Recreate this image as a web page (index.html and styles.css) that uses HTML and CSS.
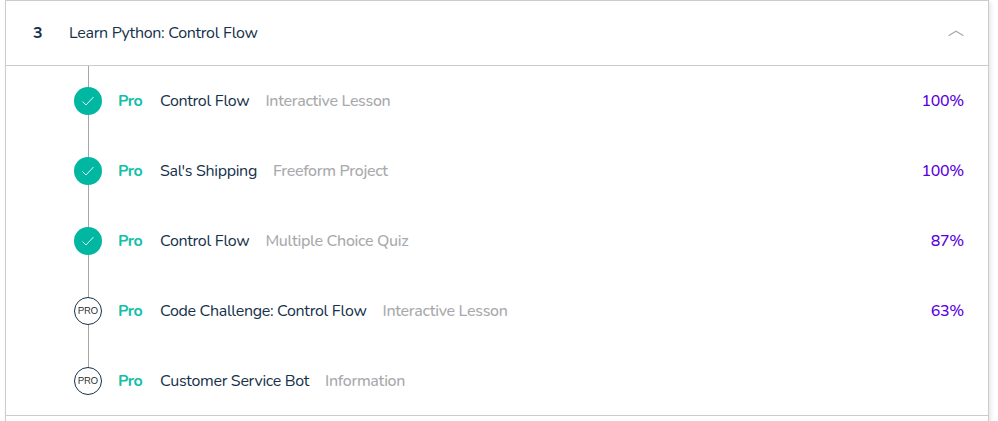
FILE: index.html
```html
<!DOCTYPE html>
<html lang="en">
<head>
<meta charset="utf-8">
<title>Learn Python: Control Flow</title>
<link rel="stylesheet" href="styles.css">
</head>
<body>
<main class="syllabus">
  <section class="module">
    <header class="module-header">
      <span class="module-number">3</span>
      <h2 class="module-title">Learn Python: Control Flow</h2>
      <svg class="chevron" width="16" height="7" viewBox="0 0 16 7"><path d="M.5 5.8 8 1.3l7.500 4.500"/></svg>
    </header>
    <ul class="items">
      <li class="item">
        <span class="status done"><svg width="14" height="12" viewBox="0 0 14 12"><path d="M1.500 6.500 5 10 12.500 2"/></svg></span>
        <span class="tag">Pro</span><span class="name">Control Flow</span><span class="kind">Interactive Lesson</span><span class="score">100%</span>
      </li>
      <li class="item">
        <span class="status done"><svg width="14" height="12" viewBox="0 0 14 12"><path d="M1.500 6.500 5 10 12.500 2"/></svg></span>
        <span class="tag">Pro</span><span class="name">Sal's Shipping</span><span class="kind">Freeform Project</span><span class="score">100%</span>
      </li>
      <li class="item">
        <span class="status done"><svg width="14" height="12" viewBox="0 0 14 12"><path d="M1.500 6.500 5 10 12.500 2"/></svg></span>
        <span class="tag">Pro</span><span class="name">Control Flow</span><span class="kind">Multiple Choice Quiz</span><span class="score">87%</span>
      </li>
      <li class="item">
        <span class="status pro">PRO</span>
        <span class="tag">Pro</span><span class="name">Code Challenge: Control Flow</span><span class="kind">Interactive Lesson</span><span class="score">63%</span>
      </li>
      <li class="item">
        <span class="status pro">PRO</span>
        <span class="tag">Pro</span><span class="name">Customer Service Bot</span><span class="kind">Information</span>
      </li>
    </ul>
  </section>
</main>
</body>
</html>
```
FILE: styles.css
```css
* { box-sizing: border-box; }
body {
  margin: 0;
  height: 421px;
  overflow: hidden;
  background: #fff;
  color: #15314b;
  font: 16px/24px Nunito, "Noto Sans", sans-serif;
}
.syllabus {
  width: 984px;
  height: 430px;
  margin-left: 5px;
  border: 1px solid #ccc;
  box-shadow: 2px 2px 4px rgba(0, 0, 0, .1);
}
.module { border-bottom: 1px solid #ccc; }
.module-header {
  display: flex;
  align-items: center;
  height: 65px;
  padding: 0 24px 0 27px;
  border-bottom: 1px solid #ccc;
}
.module-number { width: 36px; font-weight: 700; }
.module-title { margin: 0; font-size: 16px; font-weight: 400; letter-spacing: -.31px; }
.chevron { margin-left: auto; fill: none; stroke: #aaa; stroke-width: 1.300; }
.items { margin: 0; padding: 0; height: 349px; list-style: none; }
.item {
  position: relative;
  display: flex;
  align-items: center;
  height: 70px;
  padding: 0 24px 0 68px;
}
.item::before {
  content: "";
  position: absolute;
  top: 0;
  bottom: 0;
  left: 82px;
  width: 1px;
  background: #a6a6a6;
}
.item:last-child::before { bottom: 50%; }
.status {
  position: relative;
  display: flex;
  align-items: center;
  justify-content: center;
  width: 28px;
  height: 28px;
  margin-right: 16px;
  border-radius: 50%;
}
.done { background: #00b8a2; }
.done svg { fill: none; stroke: #fff; stroke-width: .9; }
.pro { border: 1px solid #15314b; background: #fff; color: #222; font-size: 10px; letter-spacing: -.1px; }
.tag { width: 42px; color: #13bfa6; font-weight: 700; letter-spacing: -.4px; }
.name { margin-right: 16px; letter-spacing: -.31px; }
.kind { color: #a9a9ac; font-weight: 500; letter-spacing: -.31px; }
.score { margin-left: auto; color: #5a00e0; font-weight: 500; letter-spacing: -.3px; }
```
